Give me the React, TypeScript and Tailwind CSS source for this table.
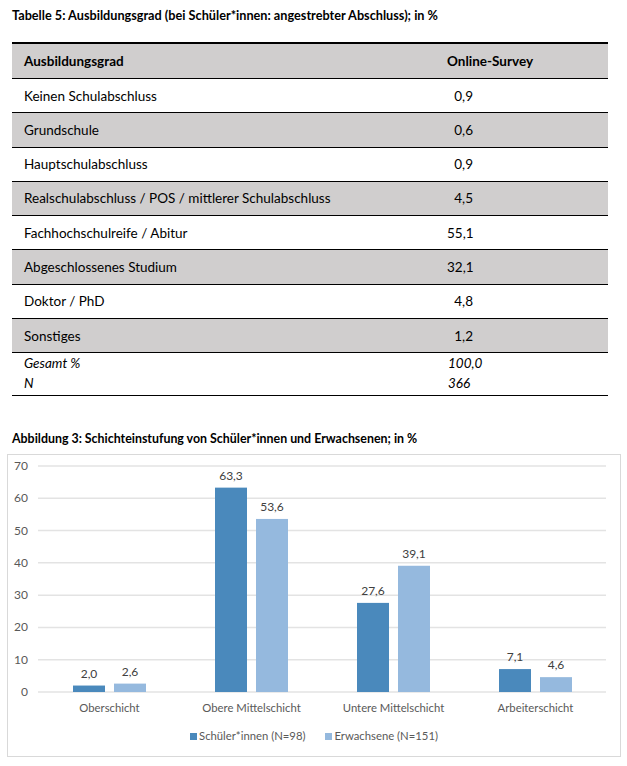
const rows: [string, string][] = [
  ["Keinen Schulabschluss", "0,9"],
  ["Grundschule", "0,6"],
  ["Hauptschulabschluss", "0,9"],
  ["Realschulabschluss / POS / mittlerer Schulabschluss", "4,5"],
  ["Fachhochschulreife / Abitur", "55,1"],
  ["Abgeschlossenes Studium", "32,1"],
  ["Doktor / PhD", "4,8"],
  ["Sonstiges", "1,2"],
]

const groups = [
  { label: "Oberschicht", a: 2.0, b: 2.6, x: 65 },
  { label: "Obere Mittelschicht", a: 63.3, b: 53.6, x: 207 },
  { label: "Untere Mittelschicht", a: 27.6, b: 39.1, x: 349 },
  { label: "Arbeiterschicht", a: 7.1, b: 4.6, x: 491 },
]

const base = 237
const unit = 3.2286
const fmt = (v: number) => v.toFixed(1).replace(".", ",")

function Chart() {
  return (
    <svg width={612} height={265} className="block" fontFamily="Lato, sans-serif">
      {[0, 10, 20, 30, 40, 50, 60, 70].map((t) => {
        const y = base - t * unit
        return (
          <g key={t}>
            <line x1={30} x2={598} y1={y} y2={y} stroke="#e3e3e3" strokeWidth={1.5} />
            <text x={20} y={y + 4} textAnchor="end" fontSize={12} fill="#595959">
              {t}
            </text>
          </g>
        )
      })}
      {groups.map((g) => (
        <g key={g.label}>
          <rect x={g.x} y={base - g.a * unit} width={32} height={g.a * unit} fill="#4a89bc" />
          <rect x={g.x + 41} y={base - g.b * unit} width={32} height={g.b * unit} fill="#95b9de" />
          <text x={g.x + 16} y={base - g.a * unit - 8} textAnchor="middle" fontSize={12} fill="#404040">
            {fmt(g.a)}
          </text>
          <text x={g.x + 57} y={base - g.b * unit - 8} textAnchor="middle" fontSize={12} fill="#404040">
            {fmt(g.b)}
          </text>
          <text x={g.x + 36.5} y={257} textAnchor="middle" fontSize={11.3} fill="#595959">
            {g.label}
          </text>
        </g>
      ))}
    </svg>
  )
}

export default function App() {
  return (
    <div className="w-[627px] h-[766px] bg-white text-black font-['Lato',sans-serif]">
      {/* Table caption */}
      <div className="h-[42px] pl-3 pt-[6px] text-[12.7px] font-bold">
        Tabelle 5: Ausbildungsgrad (bei Schüler*innen: angestrebter Abschluss); in %
      </div>

      <div className="ml-3 w-[596px] border-t-2 border-black text-[13.5px]">
        <div className="flex h-[35px] items-center border-b border-black bg-[#d0cece] font-bold">
          <div className="w-[435px] pl-3">Ausbildungsgrad</div>
          <div>Online-Survey</div>
        </div>
        {rows.map(([name, val], i) => (
          <div
            key={name}
            className={`flex h-[34.3px] items-center border-b border-black ${i % 2 === 1 ? "bg-[#d0cece]" : ""}`}
          >
            <div className="w-[435px] pl-3">{name}</div>
            <div className="w-[26px] text-right">{val}</div>
          </div>
        ))}
        <div className="border-b border-black pb-[2px] italic">
          <div className="flex h-[20px] items-center">
            <div className="w-[436px] pl-3">Gesamt %</div>
            <div>100,0</div>
          </div>
          <div className="flex h-[20px] items-center">
            <div className="w-[436px] pl-3">N</div>
            <div>366</div>
          </div>
        </div>
      </div>

      {/* Figure caption */}
      <div className="mt-[34px] h-[24px] pl-3 text-[12.4px] font-bold">
        Abbildung 3: Schichteinstufung von Schüler*innen und Erwachsenen; in %
      </div>

      <div className="ml-[7px] w-[614px] h-[303px] border border-[#d9d9d9]">
        <Chart />
        <div className="flex h-[28px] items-center justify-center gap-[20px] pt-[5px] text-[11.3px] text-[#595959]">
          <div className="flex items-center gap-[2px]">
            <span className="h-[7px] w-[7px] bg-[#4a89bc]" />
            <span>Schüler*innen (N=98)</span>
          </div>
          <div className="flex items-center gap-[2px]">
            <span className="h-[7px] w-[7px] bg-[#95b9de]" />
            <span>Erwachsene (N=151)</span>
          </div>
        </div>
      </div>
    </div>
  )
}
